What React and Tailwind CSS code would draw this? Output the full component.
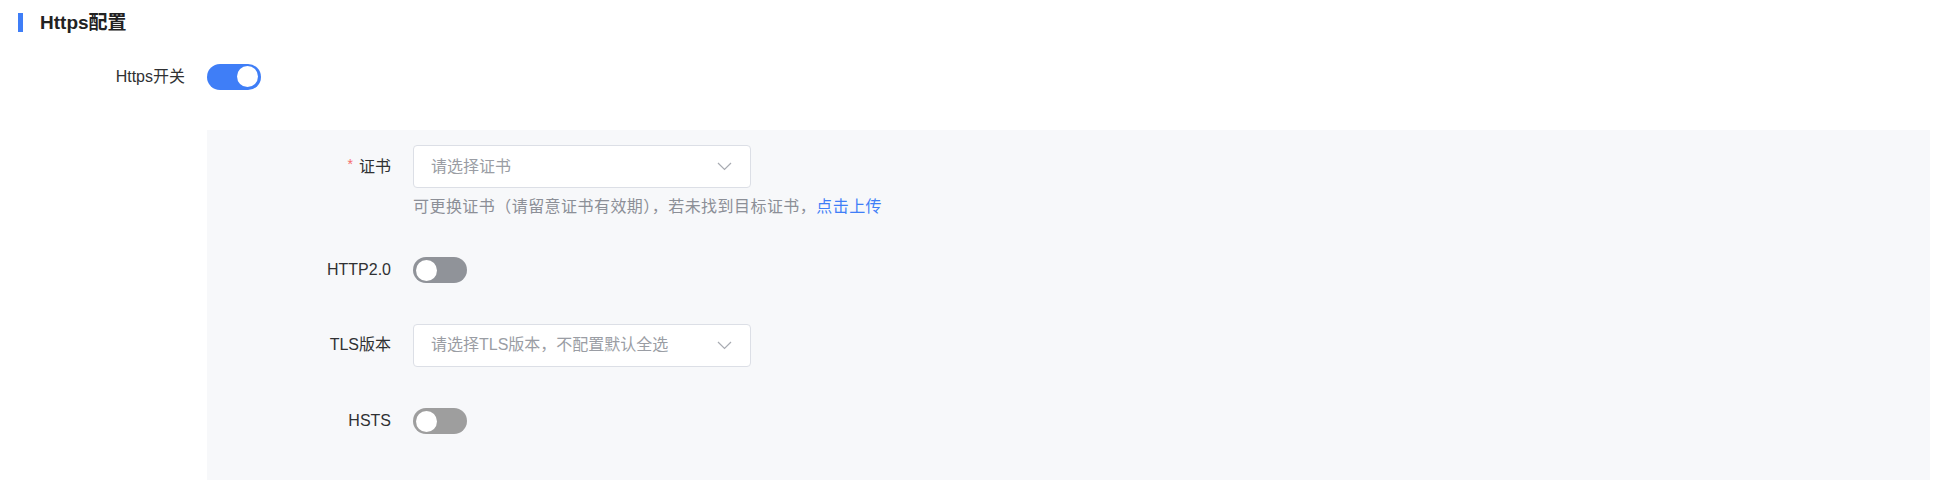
import React from 'react';

const font = { fontFamily: '"Liberation Sans", "Noto Sans CJK SC", sans-serif' };

const Switch = ({ on, color }) => (
  <div
    className={`w-[54px] h-[26px] rounded-full flex items-center px-[3px] ${
      on ? 'justify-end bg-[#3f7ef7]' : 'justify-start'
    } ${color || ''}`}
  >
    <div className="w-[21px] h-[21px] rounded-full bg-white" />
  </div>
);

const Select = ({ placeholder }) => (
  <div className="w-[338px] h-[43px] bg-white border border-[#dcdfe6] rounded-[4px] flex items-center justify-between pl-[17px] pr-[18px]">
    <span className="text-[16px] text-[#9a9da4]">{placeholder}</span>
    <svg width="15" height="9" viewBox="0 0 15 9" fill="none">
      <polyline points="1,1 7.5,7.5 14,1" stroke="#a8abb2" strokeWidth="1.2" />
    </svg>
  </div>
);

const Label = ({ children, required }) => (
  <div className="w-[206px] pr-[22px] flex justify-end items-center text-[16px] text-[#303133]">
    {required && <span className="text-[#f56c6c] text-[14px] mr-[6px] -mt-[4px]">*</span>}
    <span>{children}</span>
  </div>
);

export default function App() {
  return (
    <div className="w-full h-[500px] bg-white pr-[26px]" style={font}>
      {/* Section title */}
      <div className="flex items-center pt-[13px]">
        <div className="ml-[18px] w-[5px] h-[19px] bg-[#3f7ef7]" />
        <h2 className="ml-[17px] text-[19px] leading-[19px] font-bold text-[#222]">Https配置</h2>
      </div>

      {/* Https switch */}
      <div className="flex items-center mt-[31px] h-[27px]">
        <div className="w-[207px] pr-[22px] text-right text-[16px] text-[#303133]">Https开关</div>
        <Switch on />
      </div>

      {/* Settings panel */}
      <div className="ml-[207px] mt-[40px] h-[350px] bg-[#f7f8fa] pt-[15px]">
        <div className="flex items-center h-[43px]">
          <Label required>证书</Label>
          <Select placeholder="请选择证书" />
        </div>
        <div className="ml-[206px] mt-[7px] leading-[24px] text-[16px] tracking-[0.45px] text-[#8c8f97]">
          可更换证书（请留意证书有效期），若未找到目标证书，
          <span className="text-[#3f7ef7]">点击上传</span>
        </div>

        <div className="flex items-center h-[44px] mt-[29px]">
          <Label>HTTP2.0</Label>
          <Switch color="bg-[#909399]" />
        </div>

        <div className="flex items-center h-[44px] mt-[31px]">
          <Label>TLS版本</Label>
          <Select placeholder="请选择TLS版本，不配置默认全选" />
        </div>

        <div className="flex items-center h-[44px] mt-[32px]">
          <Label>HSTS</Label>
          <Switch color="bg-[#9e9e9e]" />
        </div>
      </div>
    </div>
  );
}
